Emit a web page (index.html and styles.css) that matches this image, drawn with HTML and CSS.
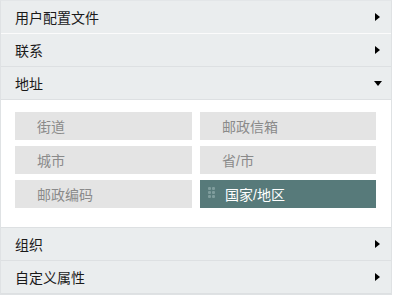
FILE: index.html
```html
<!DOCTYPE html>
<html>
<head>
    <meta charset="utf-8"/>
    <title>字段</title>
    <link rel="stylesheet" href="styles.css">
</head>
<body>
<div class="panel">
    <div class="sec_head sec_light">
        <span>用户配置文件</span><i class="arrow_right"></i>
    </div>
    <div class="sec_head">
        <span>联系</span><i class="arrow_right"></i>
    </div>
    <div class="sec_head">
        <span>地址</span><i class="arrow_down"></i>
    </div>
    <div class="sec_body">
        <div class="field">街道</div>
        <div class="field">邮政信箱</div>
        <div class="field">城市</div>
        <div class="field">省/市</div>
        <div class="field">邮政编码</div>
        <div class="field field_on"><span class="grip"><b></b><b></b><b></b><b></b><b></b><b></b></span>国家/地区</div>
    </div>
    <div class="sec_head">
        <span>组织</span><i class="arrow_right"></i>
    </div>
    <div class="sec_head">
        <span>自定义属性</span><i class="arrow_right"></i>
    </div>
</div>
</body>
</html>
```

FILE: styles.css
```css
*{margin:0;padding:0;box-sizing:border-box;}
body{
    background:#ffffff;
    font-family:"Liberation Sans","Noto Sans CJK SC",sans-serif;
    font-size:14px;
    color:#222222;
}
.panel{
    width:392px;
    border:1px solid #dfe2e4;
    border-top-color:#e3e6e8;
}
.sec_head{
    height:33px;
    display:flex;
    align-items:center;
    justify-content:space-between;
    padding:0 11px 0 14px;
    background:#eaedee;
    border-bottom:1px solid #dde0e2;
    color:#1a1a1a;
}
.sec_light{
    border-bottom-color:#fbfbfb;
}
.arrow_right{
    width:0;
    height:0;
    border-top:4px solid transparent;
    border-bottom:4px solid transparent;
    border-left:5px solid #000000;
}
.arrow_down{
    width:0;
    height:0;
    border-left:4px solid transparent;
    border-right:4px solid transparent;
    border-top:5px solid #000000;
    margin-right:-2px;
}
.sec_body{
    background:#ffffff;
    display:grid;
    grid-template-columns:177px 176px;
    column-gap:8px;
    row-gap:6px;
    padding:12px 14px 19px 14px;
    border-bottom:1px solid #dde0e2;
}
.field{
    height:28px;
    display:flex;
    align-items:center;
    padding-left:22px;
    background:#e4e4e4;
    color:#8a8a8a;
}
.field_on{
    position:relative;
    background:#577a7a;
    color:#ffffff;
    padding-left:25px;
}
.grip{
    position:absolute;
    left:8px;
    top:7px;
    width:7px;
    display:flex;
    flex-wrap:wrap;
    column-gap:1px;
    row-gap:1px;
}
.grip b{
    width:3px;
    height:3px;
    border-radius:1px;
    background:#7f9d9d;
}
```
